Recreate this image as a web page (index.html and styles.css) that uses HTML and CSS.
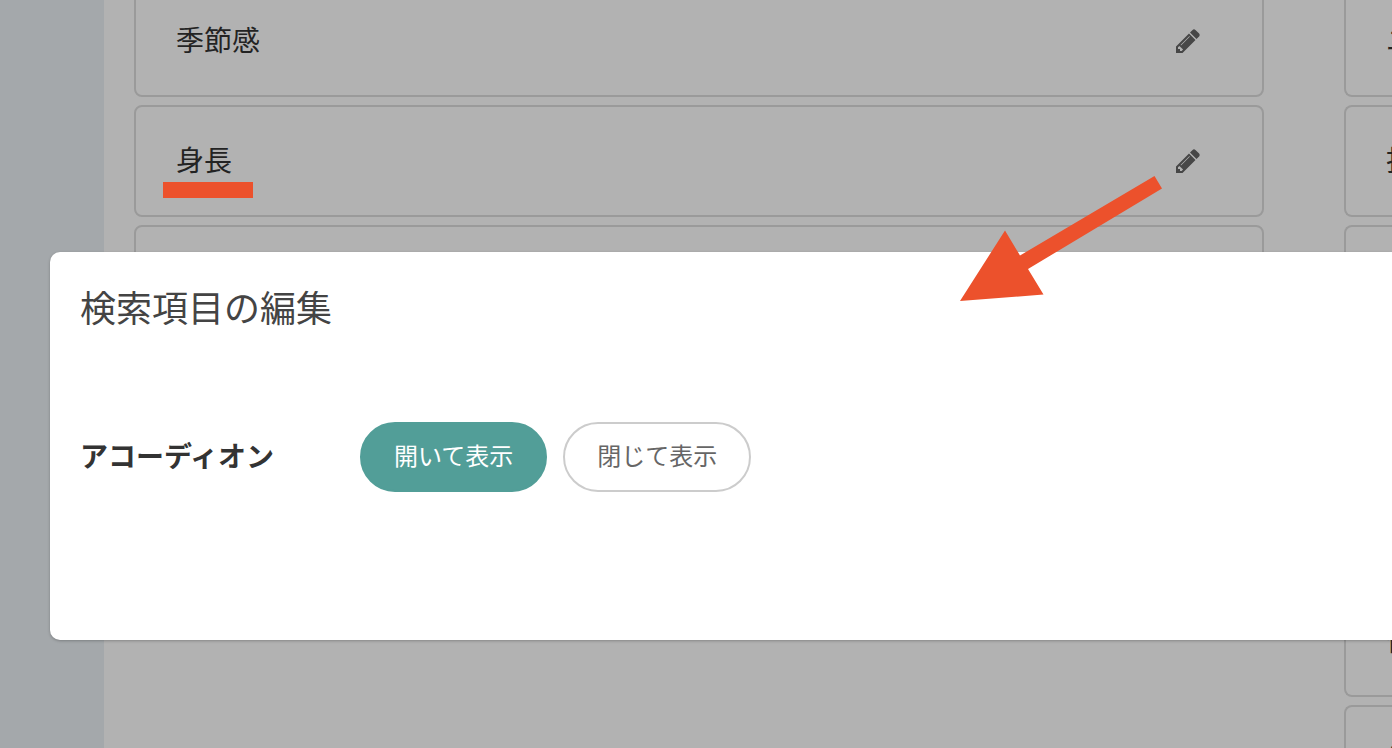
FILE: index.html
```html
<!DOCTYPE html>
<html lang="ja">
<head>
  <meta charset="UTF-8" />
  <meta name="viewport" content="width=device-width, initial-scale=1" />
  <title>検索項目の編集</title>
  <link rel="stylesheet" href="styles.css">
</head>
<body>
  <svg class="sprite" aria-hidden="true">
    <symbol id="pencil" viewBox="128 128 1536 1536">
      <path d="M491 1536l91-91-235-235-91 91v107h128v128h107zm523-928q0-22-22-22-10 0-17 7l-542 542q-7 7-7 17 0 22 22 22 10 0 17-7l542-542q7-7 7-17zm-54-192l416 416-832 832h-416v-416zm683 96q0 53-37 90l-166 166-416-416 166-165q36-38 90-38 53 0 91 38l235 234q37 39 37 91z"/>
    </symbol>
  </svg>

  <div class="page">
    <aside class="sidebar"></aside>
    <main class="columns">
      <ul class="list list-selected">
        <li class="card">
          <span class="name">季節感</span>
          <button type="button" class="edit" aria-label="編集"><svg class="icon"><use href="#pencil"/></svg></button>
        </li>
        <li class="card">
          <span class="name marked">身長</span>
          <button type="button" class="edit" aria-label="編集"><svg class="icon"><use href="#pencil"/></svg></button>
        </li>
        <li class="card"></li>
      </ul>
      <ul class="list list-other">
        <li class="card"><span class="name">ユ</span></li>
        <li class="card"><span class="name">投</span></li>
        <li class="card"></li>
        <li class="card"></li>
        <li class="card"></li>
        <li class="card"><span class="name">性</span></li>
        <li class="card"><span class="name">柄</span></li>
      </ul>
    </main>
  </div>

  <div class="overlay"></div>

  <section class="modal" role="dialog" aria-labelledby="modalTitle">
    <h2 class="modal-title" id="modalTitle">検索項目の編集</h2>
    <div class="field" role="group" aria-labelledby="accordionLabel">
      <span class="field-label" id="accordionLabel">アコーディオン</span>
      <div class="options">
        <button type="button" class="option active" aria-pressed="true">開いて表示</button>
        <button type="button" class="option" aria-pressed="false">閉じて表示</button>
      </div>
    </div>
  </section>

  <div class="marker"></div>
  <svg class="arrow" viewBox="0 0 202 126" aria-hidden="true">
    <path d="M0 125L45 54.500L60 79.500L194.500 0L202 12.500L68 93L83.500 118.500Z"/>
  </svg>
</body>
</html>
```

FILE: styles.css
```css
* {
  box-sizing: border-box;
}
body {
  margin: 0;
  height: 100vh;
  overflow: hidden;
  position: relative;
  background: #fff;
  color: #333;
  font-family: "Noto Sans CJK JP", sans-serif;
  font-size: 28px;
  line-height: 40px;
}
button {
  font: inherit;
  cursor: pointer;
}
.sprite {
  display: none;
}

/* page behind the dialog */
.page {
  display: flex;
  height: 100%;
  overflow: hidden;
}
.sidebar {
  flex: 0 0 104px;
  background: #ebf1f5;
}
.columns {
  display: flex;
  flex: 1;
  gap: 80px;
  padding-left: 30px;
  min-width: 0;
  overflow: hidden;
  background: #fff;
}
.list {
  display: flex;
  flex-direction: column;
  gap: 8px;
  min-width: 0;
  /* scrolled part of the first row */
  margin: -15px 0 0;
  padding: 0;
  list-style: none;
}
.list-selected {
  flex: 1;
}
.list-other {
  flex: 0 0 48px;
}
.card {
  display: flex;
  flex: none;
  align-items: center;
  justify-content: space-between;
  height: 112px;
  padding: 0 40px;
  border: 2px solid #ddd;
  border-radius: 8px;
  white-space: nowrap;
}
.list-other .card {
  border-right: 0;
  border-radius: 8px 0 0 8px;
  padding-right: 0;
}
.name {
  padding-bottom: 4px;
}
.edit {
  display: flex;
  padding: 8px 22px;
  border: 0;
  background: none;
}
.icon {
  width: 24px;
  height: 24px;
  fill: #666;
}
.overlay {
  position: absolute;
  inset: 0;
  background: rgba(0, 0, 0, 0.3);
}

/* dialog */
.modal {
  position: absolute;
  top: 252px;
  left: 50px;
  right: 0;
  padding: 28px 30px 148px;
  border-radius: 10px 0 0 10px;
  background: #fff;
  box-shadow: 0 1px 3px rgba(0, 0, 0, 0.25);
}
.modal-title {
  margin: 0 0 90px;
  color: #444;
  font-size: 36px;
  font-weight: 400;
  line-height: 52px;
}
.field {
  display: flex;
  align-items: center;
}
.field-label {
  width: 280px;
  padding-bottom: 4px;
  font-weight: 700;
}
.options {
  display: flex;
  gap: 16px;
}
.option {
  height: 70px;
  padding: 0 32px 4px;
  border: 2px solid #ccc;
  border-radius: 35px;
  background: #fff;
  color: #666;
  font-size: 24px;
}
.option.active {
  border-color: #529e98;
  background: #529e98;
  color: #fff;
}

/* annotations */
.marker {
  position: absolute;
  top: 182px;
  left: 163px;
  width: 90px;
  height: 16px;
  background: #ec512c;
}
.arrow {
  position: absolute;
  top: 176px;
  left: 960px;
  width: 202px;
  height: 126px;
  fill: #ec512c;
}
```
